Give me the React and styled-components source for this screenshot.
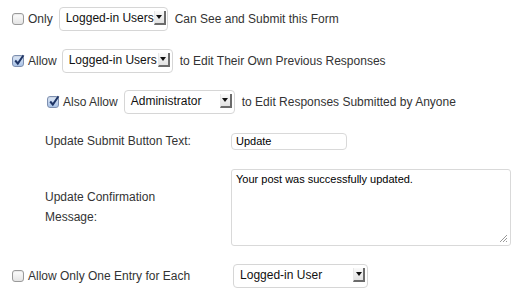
import React from 'react';
import styled, { createGlobalStyle } from 'styled-components';

const Global = createGlobalStyle`
  body {
    margin: 0;
    background: #fff;
    font-family: "Liberation Sans", Arial, sans-serif;
    font-size: 12px;
    color: #333;
  }
`;

const Form = styled.div`
  display: flex;
  flex-direction: column;
  padding: 7px 0 0 12px;
  width: 513px;
`;

const Row = styled.div`
  display: flex;
  align-items: center;
  height: ${(p) => p.h || 24}px;
  margin-top: ${(p) => p.mt || 0}px;
  padding-left: ${(p) => p.indent || 0}px;
`;

const Box = styled.span`
  width: 10px;
  height: 10px;
  border: 1px solid ${(p) => (p.checked ? '#7d8fb0' : '#9a9a9a')};
  border-radius: 3px;
  background: ${(p) =>
    p.checked
      ? 'linear-gradient(#dfe9f7, #a9c2e6)'
      : 'linear-gradient(#fdfdfd, #e4e4e4)'};
  box-shadow: inset 0 1px 1px rgba(0, 0, 0, 0.08);
  margin-right: 4px;
  position: relative;
  flex: none;
  svg {
    position: absolute;
    left: 0px;
    top: -2px;
  }
`;

const Text = styled.span`
  white-space: nowrap;
  margin-right: ${(p) => p.mr || 0}px;
`;

const Select = styled.div`
  display: flex;
  align-items: center;
  justify-content: space-between;
  box-sizing: border-box;
  flex: none;
  width: ${(p) => p.w}px;
  height: 24px;
  border: 1px solid #d6d6d6;
  border-radius: 4px;
  background: #fff;
  padding: 0 2px 0 6px;
  margin-right: 7px;
  color: #111;
  font-size: 12px;
  white-space: nowrap;
  span {
    margin-top: -3px;
  }
`;

const Arrow = styled.span`
  width: 12px;
  height: 14px;
  margin-top: 3px;
  box-sizing: border-box;
  flex: none;
  background: linear-gradient(#fafafa, #e2e2e2);
  border-right: 2px solid #6b6b6b;
  border-bottom: 2px solid #6b6b6b;
  border-left: 1px solid #e8e8e8;
  display: flex;
  align-items: center;
  justify-content: center;
  &::after {
    content: '';
    border-left: 3px solid transparent;
    border-right: 3px solid transparent;
    border-top: 4px solid #111;
  }
`;

const FieldRow = styled.div`
  display: grid;
  grid-template-columns: 186px 1fr;
  align-items: ${(p) => p.align || 'center'};
  margin-top: ${(p) => p.mt || 0}px;
  padding-left: 33px;
`;

const Label = styled.div`
  line-height: 20px;
  padding-top: ${(p) => p.pt || 0}px;
`;

const Input = styled.div`
  box-sizing: border-box;
  width: 116px;
  height: 17px;
  border: 1px solid #d9d9d9;
  border-radius: 4px;
  padding: 1px 4px;
  font-size: 11px;
  color: #000;
`;

const TextArea = styled.div`
  box-sizing: border-box;
  width: 280px;
  height: 77px;
  border: 1px solid #d9d9d9;
  border-radius: 3px;
  padding: 3px 4px;
  font-size: 11px;
  color: #000;
  position: relative;
  svg {
    position: absolute;
    right: 2px;
    bottom: 2px;
  }
`;

const Spacer = styled.span`
  flex: none;
  width: ${(p) => p.w}px;
`;

function Check({ checked }) {
  return (
    <Box checked={checked}>
      {checked && (
        <svg width="12" height="12" viewBox="0 0 12 12">
          <path d="M2.2 6.5 L4.8 9.5 L10.5 1.2" fill="none" stroke="#1f3566" strokeWidth="2" />
        </svg>
      )}
    </Box>
  );
}

function Drop({ w, children }) {
  return (
    <Select w={w}>
      <span>{children}</span>
      <Arrow />
    </Select>
  );
}

export default function App() {
  return (
    <>
      <Global />
      <Form>
        <Row>
          <Check />
          <Text mr={6}>Only</Text>
          <Drop w={109}>Logged-in Users</Drop>
          <Text>Can See and Submit this Form</Text>
        </Row>
        <Row mt={18}>
          <Check checked />
          <Text mr={5}>Allow</Text>
          <Drop w={111}>Logged-in Users</Drop>
          <Text>to Edit Their Own Previous Responses</Text>
        </Row>
        <Row mt={17} indent={35}>
          <Check checked />
          <Text mr={6}>Also Allow</Text>
          <Drop w={111}>Administrator</Drop>
          <Text>to Edit Responses Submitted by Anyone</Text>
        </Row>
        <FieldRow mt={17}>
          <Label>Update Submit Button Text:</Label>
          <Input>Update</Input>
        </FieldRow>
        <FieldRow mt={18} align="start">
          <Label pt={18}>
            Update Confirmation
            <br />
            Message:
          </Label>
          <TextArea>
            Your post was successfully updated.
            <svg width="9" height="9" viewBox="0 0 9 9">
              <path d="M8 1 L1 8 M8 4 L4 8 M8 7 L7 8" stroke="#999" strokeWidth="1" />
            </svg>
          </TextArea>
        </FieldRow>
        <Row mt={18}>
          <Check />
          <Text>Allow Only One Entry for Each</Text>
          <Spacer w={43} />
          <Drop w={135}>Logged-in User</Drop>
        </Row>
      </Form>
    </>
  );
}
